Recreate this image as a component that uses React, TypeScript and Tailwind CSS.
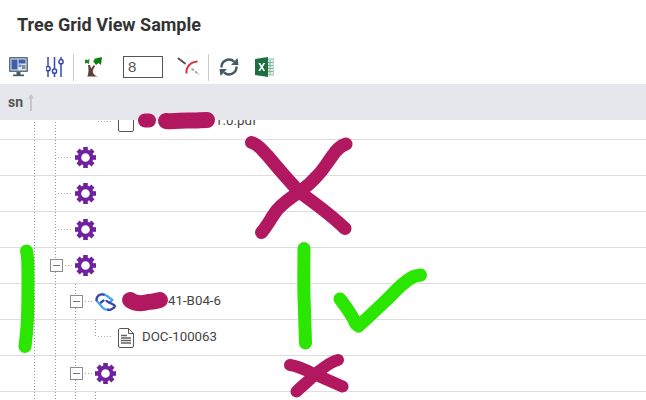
import type { ReactNode } from "react";

function Gear() {
  const teeth = [0, 45, 90, 135, 180, 225, 270, 315];
  return (
    <svg width="21" height="21" viewBox="0 0 21 21" className="shrink-0">
      {teeth.map((a) => (
        <rect key={a} x="8.2" y="0" width="4.6" height="4.5" fill="#7120a0" transform={`rotate(${a} 10.5 10.5)`} />
      ))}
      <circle cx="10.5" cy="10.5" r="6.1" fill="none" stroke="#7120a0" strokeWidth="3.6" />
    </svg>
  );
}

function DocIcon({ lines = true }: { lines?: boolean }) {
  return (
    <svg width="16" height="20" viewBox="0 0 16 20" className="shrink-0">
      <path d="M1.5 .5H10.5L15.5 5.5V18a1.5 1.5 0 0 1-1.5 1.5H2A1.5 1.5 0 0 1 .5 18V2A1.5 1.5 0 0 1 1.5 .5Z" fill="#fff" stroke="#555" />
      {lines && (
        <>
          <path d="M10.5 .5V5.5H15.5" fill="none" stroke="#555" />
          <path d="M3 7.5H9M3 10H13M3 12.5H13M3 15H13" stroke="#666" strokeWidth="1.4" />
        </>
      )}
    </svg>
  );
}

function LinkIcon() {
  return (
    <svg width="21" height="18" viewBox="0 0 21 18" className="shrink-0" fill="none" strokeWidth="2.3" strokeLinecap="round" strokeLinejoin="round">
      <path d="M1.500 7.500 8 15Q10 17 13 16.500" stroke="#42a5f5" />
      <path d="M8 1.500Q10 1.500 12 3L17.500 7 14 10" stroke="#42a5f5" />
      <path d="M1.500 7Q1.500 4 3.500 2.500 6 .8 8.500 1.500" stroke="#3949ab" />
      <path d="M8.500 7.500 6 9.500" stroke="#3949ab" />
      <path d="M11.500 8 19 12Q20.800 13.500 18.500 15L15.500 16.800H13" stroke="#3949ab" />
    </svg>
  );
}

function MonitorIcon() {
  return (
    <svg width="19" height="20" viewBox="0 0 19 20">
      <rect x="0" y="0" width="19" height="15" rx="1" fill="#5c7280" />
      <rect x="1.500" y="1.500" width="16" height="12" fill="#dfe5ea" />
      <rect x="2.500" y="2.500" width="6" height="10" fill="#3f5fa8" />
      <rect x="9.500" y="2.500" width="7" height="4" fill="#3f5fa8" />
      <rect x="9.500" y="7.500" width="3" height="2.500" fill="#6f8fc0" />
      <rect x="13" y="8" width="3.500" height="4" fill="#78909c" />
      <rect x="7.500" y="15" width="4" height="3" fill="#455a64" />
      <rect x="4" y="17.500" width="11" height="1.700" fill="#455a64" />
    </svg>
  );
}

function SlidersIcon() {
  return (
    <svg width="18" height="20" viewBox="0 0 18 20" fill="none" stroke="#3949ab" strokeWidth="1.500">
      <path d="M2 0V9.500M2 14V20M8.500 0V12M8.500 16.500V20M15 0V2.500M15 7V20" />
      <circle cx="2" cy="11.700" r="2.100" />
      <circle cx="8.500" cy="14.200" r="2.100" />
      <circle cx="15" cy="4.700" r="2.100" />
    </svg>
  );
}

function TreeIcon() {
  return (
    <svg width="18" height="20" viewBox="0 0 18 20">
      <path d="M3.500 19C5 15 4.500 11 4 8H6C6.500 10 7 11 7.500 11.500 8 10 9 9 10 8L11 9.500C9 12 8.500 14 9 16 10 18 12 19 13.500 19.500H3.500Z" fill="#5d4037" />
      <path d="M1 2.500 3.500 3 5.500 2 5 7 3 6 1 6.500Z" fill="#1b8a1b" />
      <path d="M9.500 2 18 0 17 8 14.500 6 12 8 9 4 11 3Z" fill="#0b7d0b" />
    </svg>
  );
}

function GaugeIcon() {
  return (
    <svg width="24" height="20" viewBox="0 0 24 20" fill="none">
      <path d="M1.500 1.500 8 6.500" stroke="#555" strokeWidth="2" strokeLinecap="round" />
      <path d="M9.500 16.500C9 10 13 5 20.500 4.500" stroke="#d9333f" strokeWidth="2" />
      <path d="M14.500 11.500 22 17.500" stroke="#aaa" strokeWidth="2" strokeDasharray="3 1.500" />
    </svg>
  );
}

function RefreshIcon() {
  return (
    <svg width="20" height="20" viewBox="0 0 20 20" fill="none">
      <path d="M2.500 10.500A7.500 7.500 0 0 1 15 4.500" stroke="#455a64" strokeWidth="2.400" />
      <path d="M17.500 9.500A7.500 7.500 0 0 1 5 15.500" stroke="#455a64" strokeWidth="2.400" />
      <path d="M12 8H19.500L18.500 1Z" fill="#455a64" />
      <path d="M8 12H.5L1.500 19Z" fill="#455a64" />
    </svg>
  );
}

function ExcelIcon() {
  return (
    <svg width="19" height="20" viewBox="0 0 19 20">
      <rect x="11" y="2" width="8" height="16" fill="#dfeee6" stroke="#7fb598" strokeWidth=".8" />
      <path d="M12 5.500H18M12 8.500H18M12 11.500H18M12 14.500H18M15 2.500V17.500" stroke="#7fb598" />
      <path d="M0 2 13 0V20L0 18Z" fill="#1d6f42" />
      <path d="M3.300 6H5.300L6.800 8.700 8.300 6H10.200L7.800 10 10.200 14H8.200L6.700 11.300 5.200 14H3.300L5.800 10Z" fill="#fff" />
    </svg>
  );
}

const vDots = "bg-[linear-gradient(to_bottom,#999_33%,transparent_33%)] bg-[length:1px_3px] bg-repeat-y";
const hDots = "h-px shrink-0 bg-[linear-gradient(to_right,#aaa_33%,transparent_33%)] bg-[length:3px_1px] bg-repeat-x";

function Guide({ w = "w-[20px]" }: { w?: string }) {
  return <div className={`${w} shrink-0 self-stretch ${vDots}`} />;
}

// expander box sitting on a guide line, followed by its dotted connector
function Expander() {
  return (
    <div className={`flex w-[20px] shrink-0 items-center self-stretch ${vDots}`}>
      <div className="-ml-[5px] flex h-[13px] w-[13px] shrink-0 items-center justify-center border border-[#8c8c8c] bg-white">
        <div className="h-px w-[7px] bg-[#777]" />
      </div>
      <div className={`ml-[2px] w-[8px] ${hDots}`} />
    </div>
  );
}

function Connector() {
  return (
    <div className={`flex w-[20px] shrink-0 items-center self-stretch pl-[3px] ${vDots}`}>
      <div className={`w-[13px] ${hDots}`} />
    </div>
  );
}

function Elbow() {
  return (
    <div className={`mr-[7px] flex h-[17px] w-[16px] shrink-0 items-end self-start pl-[3px] ${vDots}`}>
      <div className={`w-[13px] ${hDots}`} />
    </div>
  );
}

function Row({ children, first = false }: { children?: ReactNode; first?: boolean }) {
  return (
    <div className={`flex h-[36px] shrink-0 items-center border-b border-[#ddd] pl-[34px] ${first ? "-mt-[16px]" : ""}`}>
      {children}
    </div>
  );
}

export default function App() {
  return (
    <div className="relative h-[400px] w-[646px] overflow-hidden bg-white font-['Roboto',sans-serif]">
      <div className="flex h-[52px] items-center pb-[3px] pl-[17px]">
        <h1 className="text-[18px] leading-none font-bold text-[#333]">Tree Grid View Sample</h1>
      </div>

      <div className="flex h-[32px] items-center pb-[2px]">
        <div className="ml-[9px]"><MonitorIcon /></div>
        <div className="ml-[18px]"><SlidersIcon /></div>
        <div className="ml-[9px] h-[27px] w-px bg-[#ccc]" />
        <div className="ml-[10px]"><TreeIcon /></div>
        <div className="ml-[21px] flex h-[22px] w-[40px] items-center border border-[#555] pl-[4px] font-['Liberation_Sans',sans-serif] text-[15px] text-[#555]">8</div>
        <div className="ml-[14px]"><GaugeIcon /></div>
        <div className="ml-[7px] h-[27px] w-px bg-[#ccc]" />
        <div className="ml-[10px]"><RefreshIcon /></div>
        <div className="ml-[16px]"><ExcelIcon /></div>
      </div>

      <div className="flex h-[36px] items-center bg-[#e6e7ed] pl-[8px]">
        <span className="text-[14px] font-bold text-[#555]">sn</span>
        <svg width="6" height="17" viewBox="0 0 6 17" className="ml-[5px]">
          <path d="M3 0 6 4.500H4V17H2V4.500H0Z" fill="#c4c6c9" />
        </svg>
      </div>

      <div className="flex h-[280px] flex-col overflow-hidden text-[13.3px] text-[#444]">
        <Row first>
          <Guide w="w-[21px]" />
          <Guide />
          <div className="w-[20px] shrink-0" />
          <div className="mr-[7px] w-[16px] shrink-0 pl-[3px]"><div className={`w-[13px] ${hDots}`} /></div>
          <DocIcon lines={false} />
          <span className="ml-[81px] pb-[2px]">1.0.pdf</span>
        </Row>
        <Row><Guide w="w-[21px]" /><Connector /><Gear /></Row>
        <Row><Guide w="w-[21px]" /><Connector /><Gear /></Row>
        <Row><Guide w="w-[21px]" /><Connector /><Gear /></Row>
        <Row><Guide w="w-[21px]" /><Expander /><Gear /></Row>
        <Row>
          <Guide w="w-[21px]" /><Guide /><Expander /><LinkIcon />
          <span className="ml-[52px] pb-[2px]">41-B04-6</span>
        </Row>
        <Row>
          <Guide w="w-[21px]" /><Guide /><Guide /><Elbow /><DocIcon />
          <span className="ml-[8px] pb-[2px]">DOC-100063</span>
        </Row>
        <Row><Guide w="w-[21px]" /><Guide /><Expander /><Gear /></Row>
        <Row><Guide w="w-[21px]" /><Guide /><Guide /><Guide /></Row>
      </div>

      {/* hand-drawn marks over the screenshot */}
      <svg width="646" height="400" viewBox="0 0 646 400" fill="none" strokeLinecap="round" strokeLinejoin="round" className="pointer-events-none absolute inset-0">
        <g stroke="#b2185f">
          <path d="M145 120.500H149" strokeWidth="14" />
          <path d="M166 121C175 122 182 120 190 120.500S200 120 207 120" strokeWidth="16" />
          <path d="M130 300C136 304 142 304 148 302C152 302 156 301 160 300" strokeWidth="16" />
          <path d="M251.500 142.500C258 144 262 150 267 155C277 167 288 180 300 192.500C316 204 331 215 345 228.500" strokeWidth="13" />
          <path d="M346 144C340 146 337 149 333 155C327 163 323 170 318 175C312 182 306 187 300 191.500C290 198 283 203 277 210C271 218 267 226 261.500 232.500" strokeWidth="13" />
          <path d="M290 365C298 366 306 370 313 373.500L342.500 386.500" strokeWidth="12" />
          <path d="M338 360C330 362 323 368 316 373.500C310 380 303 385 296.500 391.500" strokeWidth="12" />
        </g>
        <g stroke="#2be600" strokeWidth="13">
          <path d="M26.500 251C28 255 28 265 28 278C28 295 28 305 27.500 318C27 330 26 338 25 346.500" />
          <path d="M304 248.500C304 265 303.500 280 304 297C304.500 312 305 328 305.500 343" />
          <path d="M340 299C347 308 352 315 356 324L358.500 326C369 317 380 306 390 296.500C397 289 404 282 411 278C414 276 417 275.500 420.500 275" />
        </g>
      </svg>
    </div>
  );
}
